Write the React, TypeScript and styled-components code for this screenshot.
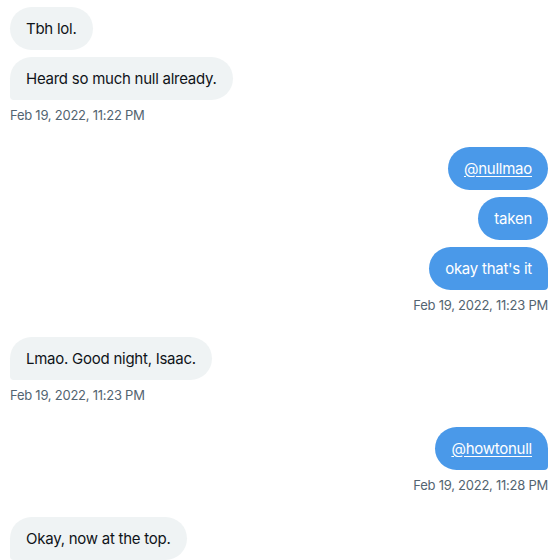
import React from "react";
import styled, { createGlobalStyle } from "styled-components";

type Side = "in" | "out";

interface Message {
  text: string;
  link?: boolean;
}

interface Group {
  side: Side;
  messages: Message[];
  time?: string;
}

const groups: Group[] = [
  {
    side: "in",
    messages: [{ text: "Tbh lol." }, { text: "Heard so much null already." }],
    time: "Feb 19, 2022, 11:22 PM",
  },
  {
    side: "out",
    messages: [
      { text: "@nullmao", link: true },
      { text: "taken" },
      { text: "okay that's it" },
    ],
    time: "Feb 19, 2022, 11:23 PM",
  },
  {
    side: "in",
    messages: [{ text: "Lmao. Good night, Isaac." }],
    time: "Feb 19, 2022, 11:23 PM",
  },
  {
    side: "out",
    messages: [{ text: "@howtonull", link: true }],
    time: "Feb 19, 2022, 11:28 PM",
  },
  {
    side: "in",
    messages: [{ text: "Okay, now at the top." }],
  },
];

const App: React.FC = () => {
  return (
    <>
      <GlobalStyle />
      <Conversation>
        {groups.map((group, gi) => (
          <MessageGroup key={gi} side={group.side}>
            {group.messages.map((msg, mi) => (
              <Bubble
                key={mi}
                side={group.side}
                tail={mi === group.messages.length - 1}
              >
                {msg.link ? <Mention>{msg.text}</Mention> : msg.text}
              </Bubble>
            ))}
            {group.time && <Timestamp>{group.time}</Timestamp>}
          </MessageGroup>
        ))}
      </Conversation>
    </>
  );
};

const GlobalStyle = createGlobalStyle`
  html, body {
    margin: 0;
    padding: 0;
    background: #ffffff;
  }
  body {
    font-family: Inter, "Liberation Sans", sans-serif;
    -webkit-font-smoothing: antialiased;
  }
`;

const Conversation = styled.div`
  width: 560px;
  height: 560px;
  overflow: hidden;
  box-sizing: border-box;
  padding: 7px 12px 0 10px;
  display: flex;
  flex-direction: column;
  gap: 24px;
`;

const MessageGroup = styled.div<{ side: Side }>`
  display: flex;
  flex-direction: column;
  align-items: ${(p) => (p.side === "out" ? "flex-end" : "flex-start")};
  gap: 7px;
`;

const Bubble = styled.div<{ side: Side; tail: boolean }>`
  box-sizing: border-box;
  height: 43px;
  padding: 0 16px;
  display: flex;
  align-items: center;
  font-size: 15px;
  line-height: 20px;
  letter-spacing: -0.25px;
  border-radius: 22px;
  background: ${(p) => (p.side === "out" ? "#4a99e9" : "#eff3f4")};
  color: ${(p) => (p.side === "out" ? "#ffffff" : "#0f1419")};
  ${(p) =>
    p.tail && p.side === "out" ? "border-bottom-right-radius: 4px;" : ""}
  ${(p) => (p.tail && p.side === "in" ? "border-bottom-left-radius: 4px;" : "")}
`;

const Mention = styled.span`
  text-decoration: underline;
  text-underline-offset: 2px;
`;

const Timestamp = styled.div`
  font-size: 13px;
  line-height: 16px;
  letter-spacing: -0.25px;
  color: #536471;
`;

export default App;
